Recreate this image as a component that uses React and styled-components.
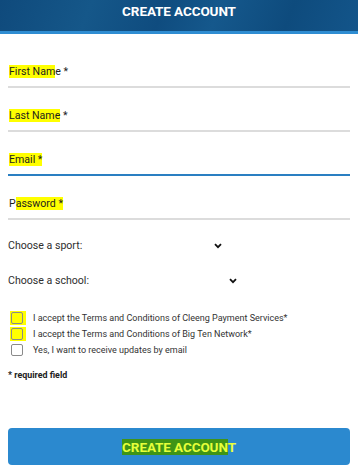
import React from "react";
import styled, { createGlobalStyle } from "styled-components";

const Global = createGlobalStyle`
  html, body { margin: 0; padding: 0; background: #fff; }
  body { font-family: Roboto, "Liberation Sans", Arial, sans-serif; }
`;

const Page = styled.div`
  width: 358px;
  min-height: 471px;
  background: #fff;
`;

const Header = styled.header`
  height: 31px;
  border-bottom: 3px solid #2f8dd2;
  background: linear-gradient(110deg, #0f4a7c 0%, #155789 25%, #0f4c7f 45%, #15588c 60%, #0e4b7d 80%, #13558a 100%);
  display: flex;
  align-items: flex-start;
  justify-content: center;
`;

const Title = styled.h1`
  margin: 3px 0 0;
  font-size: 13.5px;
  line-height: 16px;
  font-weight: 700;
  color: #fff;
  letter-spacing: -0.1px;
`;

const Form = styled.form`
  padding: 10px 8px 0;
  display: flex;
  flex-direction: column;
`;

const Field = styled.div`
  margin-top: 20px;
  padding: 0 1px 7px;
  border-bottom: 2px solid ${(p) => (p.$active ? "#2a7fc2" : "#dcdcdc")};
  font-size: 10.6px;
  line-height: 15px;
  color: #1e1e1e;
`;

const Mark = styled.mark`
  background: #ffff00;
  color: inherit;
`;

const Caret = styled.span`
  display: inline-block;
  width: 1px;
  height: 12px;
  background: #000;
  vertical-align: -2px;
  margin-right: -1px;
`;

const SelectRow = styled.div`
  margin-top: ${(p) => p.$mt}px;
  display: flex;
  align-items: center;
  font-size: 10.6px;
  line-height: 16px;
  color: #2e2e2e;
`;

const Chevron = styled.svg`
  margin-left: ${(p) => p.$ml}px;
  width: 8px;
  height: 6px;
`;

const Checks = styled.div`
  margin-top: 21px;
  display: flex;
  flex-direction: column;
`;

const CheckRow = styled.label`
  display: flex;
  align-items: center;
  height: 16px;
  font-size: 9px;
  color: #333;
`;

const BoxWrap = styled.span`
  width: 16px;
  height: 14px;
  margin: 0 7px 0 2px;
  display: flex;
  align-items: flex-start;
  justify-content: flex-start;
  padding: 1px 0 0 1px;
  box-sizing: border-box;
  background: ${(p) => (p.$hl ? "#ffff00" : "transparent")};
`;

const Box = styled.span`
  width: 12px;
  height: 12px;
  box-sizing: border-box;
  border: 1px solid #8a8a8a;
  border-radius: 2px;
  background: ${(p) => (p.$hl ? "transparent" : "#fff")};
`;

const Required = styled.p`
  margin: 10px 0 0;
  font-size: 8.9px;
  line-height: 14px;
  font-weight: 700;
  color: #222;
`;

const Button = styled.button`
  margin-top: 46px;
  height: 37px;
  border: none;
  border-radius: 4px;
  background: #2b89cf;
  font-family: Roboto, "Liberation Sans", Arial, sans-serif;
  font-size: 13.5px;
  font-weight: 700;
  color: #e9ff3c;
  letter-spacing: -0.1px;
`;

const GreenMark = styled.mark`
  background: #3f9416;
  color: #e6ff3a;
`;

const ChevronIcon = ({ ml }) => (
  <Chevron $ml={ml} viewBox="0 0 8 6">
    <path d="M1 1.2 L4 4.2 L7 1.2" fill="none" stroke="#111" strokeWidth="1.8" />
  </Chevron>
);

export default function App() {
  return (
    <Page>
      <Global />
      <Header>
        <Title>CREATE ACCOUNT</Title>
      </Header>
      <Form>
        <Field>
          <Mark>First Nam</Mark>e *
        </Field>
        <Field>
          <Mark>Last Name</Mark> *
        </Field>
        <Field $active>
          <Caret />
          <Mark>Email *</Mark>
        </Field>
        <Field>
          P<Mark>assword *</Mark>
        </Field>
        <SelectRow $mt={18}>
          Choose a sport:
          <ChevronIcon ml={132} />
        </SelectRow>
        <SelectRow $mt={19}>
          Choose a school:
          <ChevronIcon ml={140} />
        </SelectRow>
        <Checks>
          <CheckRow>
            <BoxWrap $hl>
              <Box $hl />
            </BoxWrap>
            I accept the Terms and Conditions of Cleeng Payment Services*
          </CheckRow>
          <CheckRow>
            <BoxWrap $hl>
              <Box $hl />
            </BoxWrap>
            I accept the Terms and Conditions of Big Ten Network*
          </CheckRow>
          <CheckRow>
            <BoxWrap>
              <Box />
            </BoxWrap>
            Yes, I want to receive updates by email
          </CheckRow>
        </Checks>
        <Required>* required field</Required>
        <Button type="button">
          <GreenMark>CREATE ACCOUN</GreenMark>T
        </Button>
      </Form>
    </Page>
  );
}
